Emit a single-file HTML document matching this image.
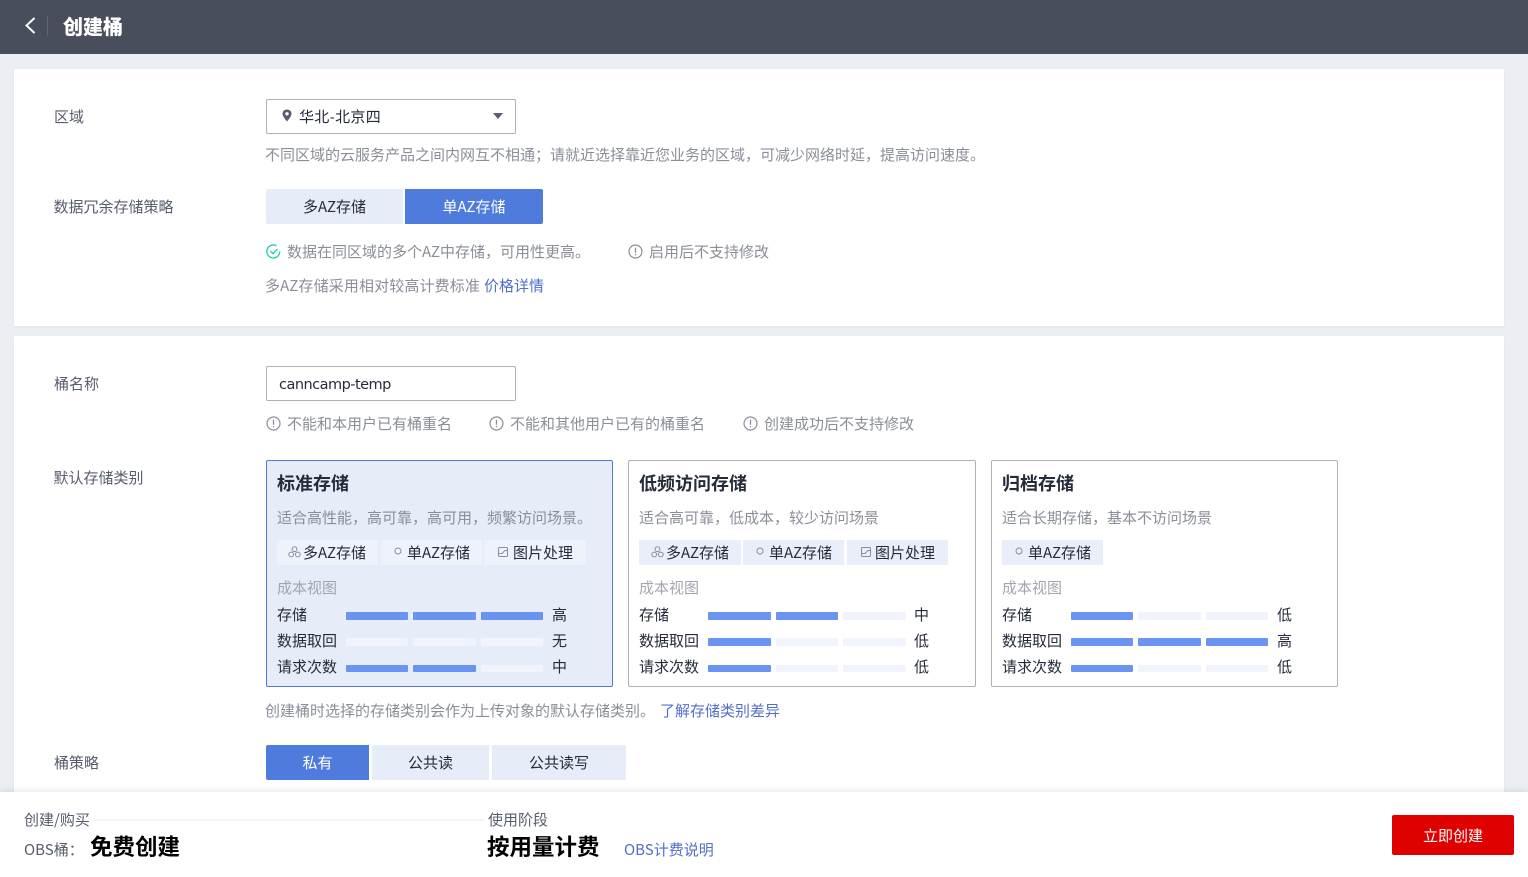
<!DOCTYPE html>
<html lang="zh"><head><meta charset="utf-8"><title>创建桶</title>
<style>
*{box-sizing:border-box}
html,body{margin:0;padding:0;width:1528px;height:877px;overflow:hidden;background:#ebeff4}
body{position:relative;font-family:"Noto Sans CJK SC","Liberation Sans",sans-serif;font-size:15px;color:#252b3a}
.a{position:absolute}
.t{position:absolute;white-space:nowrap;line-height:20px;height:20px}
.l{color:#575d6c}.g{color:#8a8e99}.b{color:#526ecc}
.card{position:absolute;background:#fff;box-shadow:0 1px 3px rgba(0,0,0,.05)}
.btn{position:absolute;height:35px;line-height:35px;text-align:center;background:#e6ecf8;color:#252b3a}
.on{background:#4f7cdc;color:#fff}
.box{position:absolute;top:460px;height:227px;border:1px solid #adb0b8;border-radius:2px;background:#fff}
.sel{background:#e6ecf8;border-color:#4f7cdc}
.h{font-size:18px;font-weight:700;color:#252b3a}
.tag{position:absolute;top:540px;height:25px;background:#eaeef9}
.tag.s{background:#eef2fb}
.bar{position:absolute;height:8px;border-radius:1px;background:#f1f4fd}
.f{background:#6a94f0}
.v{color:#a3a6af}
svg{position:absolute;overflow:visible}
</style></head><body>
<div class="a" style="left:0;top:0;width:1528px;height:54px;background:#484e5b"></div>
<svg style="left:24px;top:16px" width="14" height="20" viewBox="0 0 14 20"><path d="M10.500 2 L2.500 9.500 L10.500 17" fill="none" stroke="#fff" stroke-width="2"/></svg>
<div class="a" style="left:47px;top:16px;width:1px;height:20px;background:#5f6572"></div>
<div class="t" style="left:63px;top:16px;font-size:20px;font-weight:900;color:#fff">创建桶</div>

<div class="card" style="left:14px;top:69px;width:1490px;height:257px"></div>
<div class="card" style="left:14px;top:336px;width:1490px;height:460px"></div>

<div class="t l" style="left:54px;top:107px">区域</div>
<div class="a" style="left:266px;top:99px;width:250px;height:35px;border:1px solid #adb0b8;border-radius:2px;background:#fff"></div>
<svg style="left:281px;top:109px" width="12" height="13" viewBox="0 0 12 13"><path d="M6 0.500C3.300 0.500 1.500 2.400 1.500 4.800 1.500 7.600 6 12.500 6 12.500S10.500 7.600 10.500 4.800C10.500 2.400 8.700.5 6 .5Z" fill="#575d6c"/><circle cx="6" cy="4.800" r="1.700" fill="#fff"/></svg>
<div class="t" style="left:299px;top:107px;letter-spacing:.3px">华北-北京四</div>
<svg style="left:492px;top:112px" width="12" height="8"><path d="M1 1H11L6 7Z" fill="#575d6c"/></svg>
<div class="t g" style="left:265px;top:145px">不同区域的云服务产品之间内网互不相通；请就近选择靠近您业务的区域，可减少网络时延，提高访问速度。</div>

<div class="t l" style="left:53.500px;top:197px">数据冗余存储策略</div>
<div class="btn" style="left:266px;top:189px;width:137px;border-radius:2px 0 0 2px">多AZ存储</div>
<div class="btn on" style="left:405px;top:189px;width:138px;border-radius:0 2px 2px 0">单AZ存储</div>
<svg style="left:266px;top:244px" width="15" height="15" viewBox="0 0 15 15"><path d="M13.800 7.500A6.500 6.500 0 1 1 10.500 1.800" fill="none" stroke="#1fd0ac" stroke-width="1.300"/><path d="M4.500 7.200 7 9.700 11.500 5" fill="none" stroke="#1fd0ac" stroke-width="1.300"/></svg>
<div class="t g" style="left:287px;top:242px">数据在同区域的多个AZ中存储，可用性更高。</div>
<svg style="left:628px;top:244px" width="15" height="15" viewBox="0 0 15 15"><circle cx="7.500" cy="7.500" r="6.500" fill="none" stroke="#8a8e99" stroke-width="1.200"/><path d="M7.500 3.800V8.800M7.500 10V11.300" stroke="#8a8e99" stroke-width="1.300"/></svg>
<div class="t g" style="left:649px;top:242px">启用后不支持修改</div>
<div class="t g" style="left:265px;top:276px;letter-spacing:.13px">多AZ存储采用相对较高计费标准</div>
<div class="t b" style="left:484px;top:276px">价格详情</div>

<div class="t l" style="left:54px;top:374px">桶名称</div>
<div class="a" style="left:266px;top:366px;width:250px;height:35px;border:1px solid #adb0b8;border-radius:2px;background:#fff"></div>
<div class="t" style="left:279px;top:375px;font-family:'DejaVu Sans',sans-serif;font-size:14.500px;letter-spacing:-.52px">canncamp-temp</div>
<svg style="left:266px;top:416px" width="15" height="15" viewBox="0 0 15 15"><circle cx="7.500" cy="7.500" r="6.500" fill="none" stroke="#8a8e99" stroke-width="1.200"/><path d="M7.500 3.800V8.800M7.500 10V11.300" stroke="#8a8e99" stroke-width="1.300"/></svg>
<div class="t g" style="left:287px;top:414px">不能和本用户已有桶重名</div>
<svg style="left:489px;top:416px" width="15" height="15" viewBox="0 0 15 15"><circle cx="7.500" cy="7.500" r="6.500" fill="none" stroke="#8a8e99" stroke-width="1.200"/><path d="M7.500 3.800V8.800M7.500 10V11.300" stroke="#8a8e99" stroke-width="1.300"/></svg>
<div class="t g" style="left:510px;top:414px">不能和其他用户已有的桶重名</div>
<svg style="left:743px;top:416px" width="15" height="15" viewBox="0 0 15 15"><circle cx="7.500" cy="7.500" r="6.500" fill="none" stroke="#8a8e99" stroke-width="1.200"/><path d="M7.500 3.800V8.800M7.500 10V11.300" stroke="#8a8e99" stroke-width="1.300"/></svg>
<div class="t g" style="left:764px;top:414px">创建成功后不支持修改</div>

<div class="t l" style="left:53.500px;top:468px">默认存储类别</div>

<!-- card 1 -->
<div class="box sel" style="left:266px;width:347px"></div>
<div class="t h" style="left:277px;top:473px">标准存储</div>
<div class="t g" style="left:277px;top:508px">适合高性能，高可靠，高可用，频繁访问场景。</div>
<div class="tag s" style="left:277px;width:101px"></div><div class="tag s" style="left:381px;width:101px"></div><div class="tag s" style="left:484px;width:102px"></div>
<svg style="left:288px;top:546px" width="13" height="12" viewBox="0 0 13 12" fill="none" stroke="#8a8e99"><circle cx="6.500" cy="3.200" r="2.400"/><circle cx="3.200" cy="8.500" r="2.400"/><circle cx="9.800" cy="8.500" r="2.400"/></svg>
<div class="t" style="left:303px;top:543px">多AZ存储</div>
<svg style="left:394px;top:547px" width="8" height="9" fill="none" stroke="#8a8e99"><circle cx="4" cy="4" r="3"/></svg>
<div class="t" style="left:407px;top:543px">单AZ存储</div>
<svg style="left:498px;top:547px" width="10" height="10" fill="none" stroke="#8a8e99"><rect x=".5" y=".5" width="9" height="9" rx="1"/><path d="M.5 6.500H4L7 3.500H9.500"/></svg>
<div class="t" style="left:513px;top:543px">图片处理</div>
<div class="t v" style="left:277px;top:578px">成本视图</div>
<div class="t" style="left:277px;top:605px">存储</div><div class="t" style="left:277px;top:631px">数据取回</div><div class="t" style="left:277px;top:657px">请求次数</div>
<div class="t" style="left:552px;top:605px">高</div><div class="t" style="left:552px;top:631px">无</div><div class="t" style="left:552px;top:657px">中</div>
<div class="bar f" style="left:346px;top:612px;width:62px"></div><div class="bar f" style="left:413px;top:612px;width:63px"></div><div class="bar f" style="left:481px;top:612px;width:62px"></div>
<div class="bar" style="left:346px;top:638px;width:62px"></div><div class="bar" style="left:413px;top:638px;width:63px"></div><div class="bar" style="left:481px;top:638px;width:62px"></div>
<div class="bar f" style="left:346px;top:665px;width:62px;height:7px"></div><div class="bar f" style="left:413px;top:665px;width:63px;height:7px"></div><div class="bar" style="left:481px;top:665px;width:62px;height:7px"></div>

<!-- card 2 -->
<div class="box" style="left:628px;width:348px"></div>
<div class="t h" style="left:639px;top:473px">低频访问存储</div>
<div class="t g" style="left:639px;top:508px">适合高可靠，低成本，较少访问场景</div>
<div class="tag" style="left:639px;width:102px"></div><div class="tag" style="left:743px;width:101px"></div><div class="tag" style="left:847px;width:101px"></div>
<svg style="left:651px;top:546px" width="13" height="12" viewBox="0 0 13 12" fill="none" stroke="#8a8e99"><circle cx="6.500" cy="3.200" r="2.400"/><circle cx="3.200" cy="8.500" r="2.400"/><circle cx="9.800" cy="8.500" r="2.400"/></svg>
<div class="t" style="left:666px;top:543px">多AZ存储</div>
<svg style="left:756px;top:547px" width="8" height="9" fill="none" stroke="#8a8e99"><circle cx="4" cy="4" r="3"/></svg>
<div class="t" style="left:769px;top:543px">单AZ存储</div>
<svg style="left:861px;top:547px" width="10" height="10" fill="none" stroke="#8a8e99"><rect x=".5" y=".5" width="9" height="9" rx="1"/><path d="M.5 6.500H4L7 3.500H9.500"/></svg>
<div class="t" style="left:875px;top:543px">图片处理</div>
<div class="t v" style="left:639px;top:578px">成本视图</div>
<div class="t" style="left:639px;top:605px">存储</div><div class="t" style="left:639px;top:631px">数据取回</div><div class="t" style="left:639px;top:657px">请求次数</div>
<div class="t" style="left:914px;top:605px">中</div><div class="t" style="left:914px;top:631px">低</div><div class="t" style="left:914px;top:657px">低</div>
<div class="bar f" style="left:708px;top:612px;width:63px"></div><div class="bar f" style="left:776px;top:612px;width:62px"></div><div class="bar" style="left:843px;top:612px;width:63px"></div>
<div class="bar f" style="left:708px;top:638px;width:63px"></div><div class="bar" style="left:776px;top:638px;width:62px"></div><div class="bar" style="left:843px;top:638px;width:63px"></div>
<div class="bar f" style="left:708px;top:665px;width:63px;height:7px"></div><div class="bar" style="left:776px;top:665px;width:62px;height:7px"></div><div class="bar" style="left:843px;top:665px;width:63px;height:7px"></div>

<!-- card 3 -->
<div class="box" style="left:991px;width:347px"></div>
<div class="t h" style="left:1002px;top:473px">归档存储</div>
<div class="t g" style="left:1002px;top:508px">适合长期存储，基本不访问场景</div>
<div class="tag" style="left:1002px;width:101px"></div>
<svg style="left:1015px;top:547px" width="8" height="9" fill="none" stroke="#8a8e99"><circle cx="4" cy="4" r="3"/></svg>
<div class="t" style="left:1028px;top:543px">单AZ存储</div>
<div class="t v" style="left:1002px;top:578px">成本视图</div>
<div class="t" style="left:1002px;top:605px">存储</div><div class="t" style="left:1002px;top:631px">数据取回</div><div class="t" style="left:1002px;top:657px">请求次数</div>
<div class="t" style="left:1277px;top:605px">低</div><div class="t" style="left:1277px;top:631px">高</div><div class="t" style="left:1277px;top:657px">低</div>
<div class="bar f" style="left:1071px;top:612px;width:62px"></div><div class="bar" style="left:1138px;top:612px;width:63px"></div><div class="bar" style="left:1206px;top:612px;width:62px"></div>
<div class="bar f" style="left:1071px;top:638px;width:62px"></div><div class="bar f" style="left:1138px;top:638px;width:63px"></div><div class="bar f" style="left:1206px;top:638px;width:62px"></div>
<div class="bar f" style="left:1071px;top:665px;width:62px;height:7px"></div><div class="bar" style="left:1138px;top:665px;width:63px;height:7px"></div><div class="bar" style="left:1206px;top:665px;width:62px;height:7px"></div>

<div class="t g" style="left:265px;top:701px">创建桶时选择的存储类别会作为上传对象的默认存储类别。</div>
<div class="t b" style="left:660px;top:701px">了解存储类别差异</div>

<div class="t l" style="left:54px;top:753px">桶策略</div>
<div class="btn on" style="left:266px;top:745px;width:103px;border-radius:2px 0 0 2px">私有</div>
<div class="btn" style="left:372px;top:745px;width:117px">公共读</div>
<div class="btn" style="left:492px;top:745px;width:134px;border-radius:0 2px 2px 0">公共读写</div>

<!-- footer -->
<div class="a" style="left:0;top:792px;width:1528px;height:85px;background:#fff;box-shadow:0 -2px 6px rgba(0,0,0,.08)"></div>
<div class="t l" style="left:24px;top:810px">创建/购买</div>
<div class="a" style="left:94px;top:819px;width:390px;height:2px;background:#f3f4f6"></div>
<div class="t l" style="left:488px;top:810px">使用阶段</div>
<div class="t l" style="left:24px;top:840px">OBS桶：</div>
<div class="t" style="left:90px;top:836px;font-size:22.500px;font-weight:700;color:#000">免费创建</div>
<div class="t" style="left:487px;top:836px;font-size:22.500px;font-weight:700;color:#000">按用量计费</div>
<div class="t b" style="left:624px;top:840px">OBS计费说明</div>
<div class="a" style="left:1392px;top:815px;width:122px;height:40px;line-height:42px;text-align:center;background:#df0000;color:#fff;border-radius:2px">立即创建</div>
</body></html>
